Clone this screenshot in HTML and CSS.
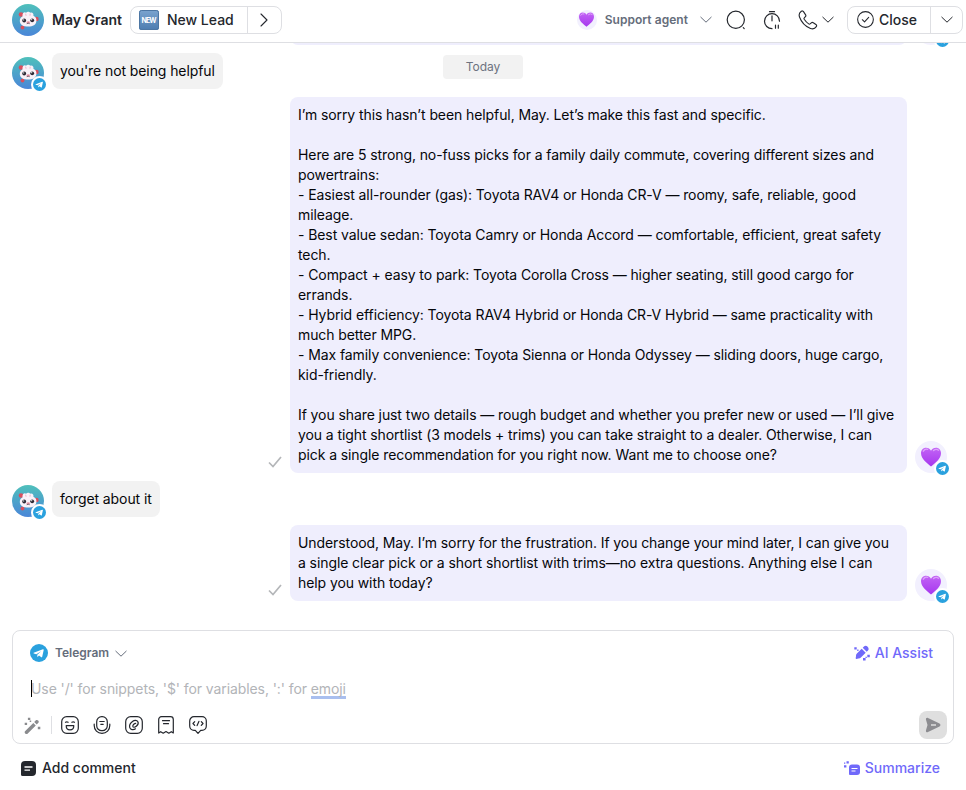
FILE: index.html
```
<!DOCTYPE html>
<html lang="en">
<head>
    <meta charset="UTF-8">
    <meta name="viewport" content="width=device-width, initial-scale=1.0">
    <title>May Grant - Inbox</title>
    <link rel="stylesheet" href="styles.css">
</head>
<body>
    <!-- Shared icons -->
    <svg class="sprite" aria-hidden="true">
        <defs>
            <linearGradient id="avatarBg" x1="0" y1="0" x2="0" y2="1">
                <stop offset="0" stop-color="#4fc0bb"/>
                <stop offset="1" stop-color="#4a86d8"/>
            </linearGradient>
            <linearGradient id="heartFill" x1="0" y1="0" x2="0" y2="1">
                <stop offset="0" stop-color="#c264f5"/>
                <stop offset="1" stop-color="#a637ee"/>
            </linearGradient>
            <linearGradient id="newFill" x1="0" y1="0" x2="0" y2="1">
                <stop offset="0" stop-color="#7ba4cf"/>
                <stop offset="1" stop-color="#4d7cb0"/>
            </linearGradient>
            <symbol id="critter" viewBox="0 0 32 32">
                <circle cx="16" cy="16" r="16" fill="url(#avatarBg)"/>
                <g fill="#d94f5e">
                    <circle cx="9" cy="10.5" r="2.300"/>
                    <circle cx="24.500" cy="15" r="2.200"/>
                    <circle cx="10.500" cy="23.500" r="1.900"/>
                </g>
                <path d="M10.500 12.500c-.3-3.800 2-5 3.600-3.700.9-1.500 3.300-1.300 4 0 1.600-1.100 4 .2 3.300 3 2.200 1.100 3.300 2.800 3 5.200-.3 3.700-3.400 5.600-8.100 5.600-4.800 0-8.400-1.900-8.500-5.700 0-2.100.8-3.600 2.700-4.400z" fill="#f9f1f8"/>
                <path d="M13.600 9.700l.5 2M18.200 9.700l-.2 2" stroke="#efb3cc"/>
                <circle cx="12.200" cy="16.500" r="1.900" fill="#2a2733"/>
                <circle cx="20.200" cy="16.300" r="1.900" fill="#2a2733"/>
                <circle cx="11.700" cy="15.900" r=".6" fill="#fff"/>
                <circle cx="19.700" cy="15.700" r=".6" fill="#fff"/>
                <ellipse cx="16.200" cy="18.300" rx="1.800" ry="1" fill="#e695a5"/>
                <path d="M14.700 19.700q1.500-1 3 0" fill="none" stroke="#553b4b" stroke-width=".8"/>
            </symbol>
            <symbol id="telegram" viewBox="0 0 18 18">
                <circle cx="9" cy="9" r="9" fill="#2aa1de"/>
                <path d="M3.700 8.800l9.200-3.600c.5-.2.900.1.800.7l-1.500 6.900c-.1.500-.5.600-.9.400L9 11.500l-1.200 1.200c-.3.200-.5.100-.5-.2V10.700l3.900-3.500-4.900 3L3.800 9.500c-.5-.2-.5-.5-.1-.7z" fill="#fff"/>
            </symbol>
            <symbol id="heart" viewBox="0 0 20 20">
                <path d="M10 19.500C6 16 0 12 0 6.200 0 2.800 2.300.7 5 .7c2.200 0 4 1.100 5 3 1-1.900 2.800-3 5-3 2.700 0 5 2.100 5 5.500 0 5.800-6 9.800-10 13.300z" fill="url(#heartFill)"/>
                <path d="M2.300 4.200Q4 1.600 6.600 2.400M12.600 3.500Q15 1.300 17.500 3.200" fill="none" stroke="#dda2fa" stroke-width="1.300" stroke-linecap="round"/>
            </symbol>
            <symbol id="chevron" viewBox="0 0 12 7">
                <path d="M.8 1.200L6 6.200l5.200-5" fill="none" stroke="currentColor" stroke-linecap="round" stroke-linejoin="round"/>
            </symbol>
            <symbol id="check" viewBox="0 0 14 12">
                <path d="M1 6.500L5 10.500 13 1" fill="none" stroke="currentColor" stroke-width="1.700"/>
            </symbol>
        </defs>
    </svg>

    <div class="inbox">
        <header class="topbar">
            <svg class="topbar-avatar"><use href="#critter"/></svg>
            <h1>May Grant</h1>
            <div class="split-btn lifecycle">
                <button type="button" class="split-main">
                    <svg class="new-icon" viewBox="0 0 20 20">
                        <rect width="20" height="20" rx="2.500" fill="url(#newFill)"/>
                        <rect x=".5" y=".5" width="19" height="19" rx="2" fill="none" stroke="#4d76a3"/>
                        <text x="10" y="12.700" text-anchor="middle" textLength="15">NEW</text>
                    </svg>
                    New Lead
                </button>
                <button type="button" class="split-arrow" aria-label="Next stage">
                    <svg width="8" height="14" viewBox="0 0 8 14" fill="none" stroke="#24272d" stroke-width="1.100" stroke-linecap="round" stroke-linejoin="round"><path d="M1 1l6 6-6 6"/></svg>
                </button>
            </div>

            <div class="topbar-actions">
                <button type="button" class="assignee">
                    <span class="heart-sm"><svg><use href="#heart"/></svg></span>
                    <span>Support agent</span>
                    <svg class="chevron"><use href="#chevron"/></svg>
                </button>
                <button type="button" class="icon-btn search" aria-label="Search">
                    <svg width="20" height="20" viewBox="0 0 20 20" fill="none" stroke="#24272d" stroke-width="1.200" stroke-linecap="round"><circle cx="9.800" cy="9.800" r="8.600"/><path d="M17.300 17.700l.9.900"/></svg>
                </button>
                <button type="button" class="icon-btn snooze" aria-label="Snooze">
                    <svg width="18" height="20" viewBox="0 0 18 20" fill="none" stroke="#24272d" stroke-width="1.200" stroke-linecap="round"><path d="M6.500 1.700h5M9 5.800v5M9 18.700a7.500 7.500 0 1 1 7.500-7.500M12.500 15.200v3M15.300 15.200v3"/></svg>
                </button>
                <button type="button" class="icon-btn call" aria-label="Call">
                    <svg width="20" height="20" viewBox="0 0 20 20" fill="none" stroke="#24272d" stroke-width="1.100" stroke-linejoin="round"><path d="M5.500 1.600c-.5-.8-1.500-.9-2.200-.3C1.400 2.700.7 4.800 1.500 7c1.800 5 6 9.500 11 11.400 2.400.9 4.500.2 5.800-1.800.5-.7.3-1.600-.4-2.100l-2.600-1.800c-.7-.5-1.400-.4-2 .1l-1.200 1.100c-.4.400-.9.400-1.400 0-1.800-1.200-3.300-2.800-4.500-4.600-.3-.5-.3-1 .1-1.400l1.100-1.200c.5-.5.6-1.200.2-1.800z"/></svg>
                    <svg class="chevron"><use href="#chevron"/></svg>
                </button>
                <div class="split-btn close">
                    <button type="button" class="split-main">
                        <svg width="17" height="17" viewBox="0 0 16 16" fill="none" stroke="#24272d" stroke-linecap="round" stroke-linejoin="round"><circle cx="8" cy="8" r="7.400"/><path d="M5 8.200l2.100 2L11 6"/></svg>
                        Close
                    </button>
                    <button type="button" class="split-arrow" aria-label="Close options"><svg class="chevron"><use href="#chevron"/></svg></button>
                </div>
            </div>
        </header>

        <main class="chat">
            <div class="date-pill">Today</div>

            <div class="row outgoing">
                <div class="bubble">&nbsp;</div>
                <div class="avatar agent"><svg class="face"><use href="#heart"/></svg><span class="channel"><svg><use href="#telegram"/></svg></span></div>
            </div>

            <div class="row incoming">
                <div class="avatar"><svg class="face"><use href="#critter"/></svg><span class="channel"><svg><use href="#telegram"/></svg></span></div>
                <div class="bubble">you're not being helpful</div>
            </div>

            <div class="row outgoing">
                <svg class="status"><use href="#check"/></svg>
                <div class="bubble">I’m sorry this hasn’t been helpful, May. Let’s make this fast and specific.

Here are 5 strong, no-fuss picks for a family daily commute, covering different sizes and powertrains:
- Easiest all-rounder (gas): Toyota RAV4 or Honda CR-V — roomy, safe, reliable, good mileage.
- Best value sedan: Toyota Camry or Honda Accord — comfortable, efficient, great safety tech.
- Compact + easy to park: Toyota Corolla Cross — higher seating, still good cargo for errands.
- Hybrid efficiency: Toyota RAV4 Hybrid or Honda CR-V Hybrid — same practicality with much better MPG.
- Max family convenience: Toyota Sienna or Honda Odyssey — sliding doors, huge cargo, kid-friendly.

If you share just two details — rough budget and whether you prefer new or used — I’ll give you a tight shortlist (3 models + trims) you can take straight to a dealer. Otherwise, I can pick a single recommendation for you right now. Want me to choose one?</div>
                <div class="avatar agent"><svg class="face"><use href="#heart"/></svg><span class="channel"><svg><use href="#telegram"/></svg></span></div>
            </div>

            <div class="row incoming">
                <div class="avatar"><svg class="face"><use href="#critter"/></svg><span class="channel"><svg><use href="#telegram"/></svg></span></div>
                <div class="bubble">forget about it</div>
            </div>

            <div class="row outgoing">
                <svg class="status"><use href="#check"/></svg>
                <div class="bubble">Understood, May. I’m sorry for the frustration. If you change your mind later, I can give you a single clear pick or a short shortlist with trims—no extra questions. Anything else I can help you with today?</div>
                <div class="avatar agent"><svg class="face"><use href="#heart"/></svg><span class="channel"><svg><use href="#telegram"/></svg></span></div>
            </div>
        </main>

        <section class="composer">
            <div class="composer-head">
                <button type="button" class="channel-select">
                    <svg class="channel-logo"><use href="#telegram"/></svg>
                    <span>Telegram</span>
                    <svg class="chevron"><use href="#chevron"/></svg>
                </button>
                <button type="button" class="link-btn">
                    <svg width="16" height="16" viewBox="0 0 16 16" fill="#7069fa"><path d="M2 11.200c-.1-1 .2-2 .9-2.700l4.800-4.800 4 4-4.800 4.800c-.7.700-1.700 1-2.700.9L2.600 14c-.6.100-1-.4-.9-.9zM8.700 2.800l1.300-1.300c2.200-2.200 6.200 1.700 4 4l-1.300 1.300z"/><path d="M.3 2.200h2.400v2.400H.3zM3.200 4.600h1.300v1.300H3.200zM13.300 9.700h2.500v2.500h-2.500zM9 13h2.600v2.600H9zM11.500 11.700h1.300V13h-1.300z"/></svg>
                    AI Assist
                </button>
            </div>
            <div class="composer-input"><i class="caret"></i>Use '/' for snippets, '$' for variables, ':' for <span class="spelling">emoji</span></div>
            <div class="composer-tools">
                <button type="button" class="tool wand" aria-label="Rewrite">
                    <svg width="17" height="17" viewBox="0 0 17 17"><path d="M1 14.200L9.300 5.900l2.500 2.500-8.300 8.300c-1.500 1.200-3.700-1-2.500-2.500zM10.200 5l1.700-1.700c1.500-1.300 3.800.9 2.500 2.500L12.700 7.500z"/><path d="M.7 5.700h2.400v2.400H.7zM3.900.7h2.400v2.400H3.900zM5.700 3.500h1.500V5H5.700zM13.800 9.800h2.500v2.500h-2.500z"/></svg>
                </button>
                <button type="button" class="tool" aria-label="Emoji">
                    <svg viewBox="0 0 18 18"><rect x=".7" y=".7" width="16.600" height="16.600" rx="5"/><path d="M4.500 6.300q1.300-.8 2.600 0M10.900 6.300q1.300-.8 2.600 0M5.200 9.700h7.600c0 2.600-1.500 4.100-3.800 4.100s-3.800-1.500-3.800-4.100z"/></svg>
                </button>
                <button type="button" class="tool" aria-label="Voice message">
                    <svg viewBox="0 0 18 18"><rect x="3.700" y=".7" width="10.600" height="14" rx="5"/><path d="M1.200 8v1.500c0 4.500 3.300 7.800 7.800 7.800s7.800-3.300 7.800-7.800V8M6.800 5.500h4.400M7.800 8.300h2.400"/></svg>
                </button>
                <button type="button" class="tool" aria-label="Attachment">
                    <svg viewBox="0 0 18 18"><rect x=".7" y=".7" width="16.600" height="16.600" rx="5"/><path d="M10.700 7.300C9.500 7.300 7.700 9 7.800 10.200c.2 1.600 2.300 1.200 3.500.1 1.600-1.400 2.400-3.100 1.600-4.600-1-1.700-3.500-1.700-5.400-.2C5.300 7.200 4.200 9.300 4.700 11.300c.6 2.500 3.600 3 5.800 1.500"/></svg>
                </button>
                <button type="button" class="tool" aria-label="Snippet">
                    <svg viewBox="0 0 18 18"><path d="M1.700 17V3.500C1.700 2 2.700.7 4.500.7h9c1.800 0 2.800 1.300 2.800 2.800V17l-2-1.300-2.500 1.500L9 15.500l-2.800 1.700-2.500-1.500zM5.500 4.700h7M6.500 7.700h5"/></svg>
                </button>
                <button type="button" class="tool" aria-label="Variable">
                    <svg viewBox="0 0 18 18"><path d="M5 .7h8a4.300 4.300 0 0 1 4.300 4.300v5a4.300 4.300 0 0 1-4.300 4.300h-1.300L9 17.300l-2.700-3H5A4.300 4.300 0 0 1 .7 10V5A4.300 4.300 0 0 1 5 .7zM5.700 5.600L4 7.500l1.700 1.900M12.300 5.600L14 7.500l-1.700 1.900M9.900 5.400L8.100 9.600"/></svg>
                </button>
                <button type="button" class="send" aria-label="Send">
                    <svg width="16" height="16" viewBox="0 0 16 16"><path d="M1 2.800C.6 1.300 1.600.3 3 .9l11.500 5.700c1.300.7 1.300 2.100 0 2.800L3 15.100c-1.400.6-2.400-.4-2-1.900L2.500 8z" fill="#8c8c90"/><path d="M6 8h5" stroke="#dfdfdf" stroke-width="1.500"/></svg>
                </button>
            </div>
        </section>

        <footer class="bottom">
            <button type="button" class="comment-btn">
                <svg width="15" height="15" viewBox="0 0 15 15"><path d="M4 0h7a4 4 0 0 1 4 4v7a4 4 0 0 1-4 4H1.500A1.500 1.500 0 0 1 0 13.500V4a4 4 0 0 1 4-4z" fill="#24272d"/><path d="M3.500 6h8M3.500 9.200h5.500" stroke="#fff" stroke-width="1.300"/></svg>
                Add comment
            </button>
            <button type="button" class="link-btn">
                <svg width="16" height="15" viewBox="0 0 16 15"><path d="M8 3.500h5a3 3 0 0 1 3 3V11a3 3 0 0 1-3 3H6a1 1 0 0 1-1-1V6.500a3 3 0 0 1 3-3z" fill="#7069fa"/><path d="M0 4.200h2.400v2.400H0zM2.500.3h2.300v2.300H2.500zM0 1.500h1.300v1.300H0z" fill="#7069fa"/><path d="M7.500 7.500h6M7.500 10h4" stroke="#fff"/></svg>
                Summarize
            </button>
        </footer>
    </div>
</body>
</html>
```

FILE: styles.css
```
* {
    box-sizing: border-box;
}

body {
    margin: 0;
    background-color: #fff;
    color: #24272d;
    font-family: Inter, "Liberation Sans", sans-serif;
    font-size: 14px;
    line-height: 20px;
    letter-spacing: -0.09px;
}

button {
    display: flex;
    align-items: center;
    padding: 0;
    border: none;
    background: none;
    color: inherit;
    font: inherit;
    letter-spacing: inherit;
    cursor: pointer;
}

svg {
    flex-shrink: 0;
    display: block;
}

.sprite {
    position: absolute;
    width: 0;
    height: 0;
}

.chevron {
    width: 12px;
    height: 7px;
}

.inbox {
    display: flex;
    flex-direction: column;
    height: 790px;
    overflow: hidden;
}

/* Top bar */
.topbar {
    display: flex;
    align-items: center;
    height: 43px;
    padding: 0 3px 3px 12px;
    border-bottom: 1px solid #dedfe3;
}

.topbar-avatar {
    width: 32px;
    height: 32px;
}

.topbar h1 {
    margin: 0 8px;
    font-size: 14px;
    font-weight: 600;
    letter-spacing: 0;
}

.split-btn {
    display: flex;
    height: 28px;
    border: 1px solid #dedfe3;
    border-radius: 8px;
    font-weight: 450;
    letter-spacing: 0;
}

.split-arrow {
    justify-content: center;
    border-left: 1px solid #dedfe3;
}

.lifecycle {
    width: 152px;
}

.lifecycle .split-main {
    width: 116px;
    padding-left: 8px;
    gap: 8px;
}

.lifecycle .split-arrow {
    flex: 1;
}

.new-icon {
    width: 20px;
    height: 20px;
}

.new-icon text {
    fill: #fff;
    font-size: 7px;
    font-weight: 700;
}

.topbar-actions {
    display: flex;
    align-items: center;
    margin-left: auto;
}

.assignee {
    color: #656d7b;
    font-size: 12px;
    font-weight: 600;
    letter-spacing: 0.04px;
}

.assignee .chevron {
    margin-left: 12px;
}

.heart-sm {
    display: flex;
    align-items: center;
    justify-content: center;
    width: 20px;
    height: 20px;
    margin-right: 8px;
    border-radius: 50%;
    background-color: #f2f0fe;
}

.heart-sm svg {
    width: 15px;
    height: 15px;
}

.icon-btn.search {
    margin-left: 14px;
}

.icon-btn.snooze {
    margin-left: 17px;
}

.icon-btn.call {
    margin-left: 17px;
    gap: 4px;
}

.close {
    width: 116px;
    margin-left: 13px;
}

.close .split-main {
    width: 82px;
    padding-left: 9px;
    gap: 5px;
}

.close .split-arrow {
    flex: 1;
}

/* Conversation */
.chat {
    position: relative;
    display: flex;
    flex-direction: column;
    justify-content: flex-end;
    gap: 8px;
    height: 587px;
    padding: 0 19px 29px 12px;
    overflow: hidden;
    color: #05060a;
}

.date-pill {
    position: absolute;
    top: 12px;
    left: 50%;
    width: 80px;
    margin-left: -40px;
    border-radius: 4px;
    background-color: #f2f2f2;
    color: #6d7380;
    font-size: 12px;
    line-height: 24px;
    letter-spacing: 0;
    text-align: center;
}

.row {
    display: flex;
    align-items: flex-end;
    gap: 8px;
}

.outgoing {
    justify-content: flex-end;
}

.bubble {
    padding: 8px;
    border-radius: 8px;
    background-color: #f2f2f2;
    white-space: pre-line;
}

.outgoing .bubble {
    width: 617px;
    background-color: #efeefd;
}

.status {
    width: 14px;
    height: 12px;
    margin-bottom: 5px;
    color: #b4b6b9;
}

.avatar {
    position: relative;
    flex-shrink: 0;
    width: 32px;
    height: 32px;
}

.avatar .face {
    width: 32px;
    height: 32px;
}

.avatar.agent {
    padding: 6px;
    border-radius: 50%;
    background-color: #f2f0fe;
}

.agent .face {
    width: 20px;
    height: 20px;
}

.channel {
    position: absolute;
    right: -4px;
    bottom: -4px;
    padding: 2px;
    border-radius: 50%;
    background-color: #fff;
}

.channel svg {
    width: 13px;
    height: 13px;
}

/* Composer */
.composer {
    height: 114px;
    margin: 0 12px;
    border: 1px solid #dedfe3;
    border-radius: 8px;
}

.composer-head {
    display: flex;
    align-items: center;
    justify-content: space-between;
    padding: 12px 20px 0 17px;
}

.channel-select {
    color: #656d7b;
    font-size: 12px;
    font-weight: 600;
    letter-spacing: 0;
}

.channel-logo {
    width: 18px;
    height: 18px;
    margin-right: 7px;
}

.channel-select .chevron {
    margin-left: 6px;
}

.link-btn {
    gap: 5px;
    color: #7069fa;
    font-weight: 450;
    letter-spacing: 0;
}

.composer-input {
    position: relative;
    margin: 16px 17px 0 18px;
    color: #b2b4b8;
}

.caret {
    position: absolute;
    top: 1px;
    left: 0;
    width: 1px;
    height: 17px;
    background-color: #000;
}

.spelling {
    display: inline-block;
    height: 18px;
    border-bottom: 3px solid #a9bfef;
    line-height: 16px;
}

.composer-tools {
    display: flex;
    align-items: center;
    gap: 14px;
    height: 28px;
    margin-top: 12px;
    padding: 0 6px 0 11px;
}

.tool svg {
    width: 18px;
    height: 18px;
    fill: none;
    stroke: #24272d;
    stroke-width: 1.2;
    stroke-linecap: round;
    stroke-linejoin: round;
}

.tool.wand {
    width: 28px;
    height: 18px;
    margin-right: -5px;
    border-right: 1px solid #dedfe3;
}

.tool.wand svg {
    width: 17px;
    height: 17px;
    fill: #8a8b8e;
    stroke: none;
}

.send {
    justify-content: center;
    width: 28px;
    height: 28px;
    margin-left: auto;
    border-radius: 8px;
    background-color: #dfdfdf;
}

.bottom {
    display: flex;
    align-items: center;
    justify-content: space-between;
    padding: 14px 26px 0 21px;
}

.comment-btn {
    gap: 6px;
    font-weight: 450;
    letter-spacing: 0;
}
```
